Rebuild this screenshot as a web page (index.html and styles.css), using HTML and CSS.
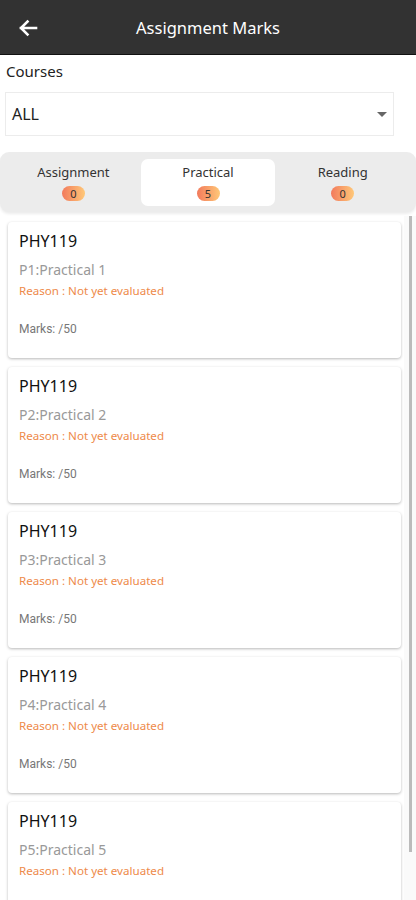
FILE: index.html
```html
<!DOCTYPE html>
<html lang="en">
<head>
  <meta charset="UTF-8">
  <meta name="viewport" content="width=device-width, initial-scale=1.0">
  <title>Assignment Marks</title>
  <link rel="stylesheet" href="styles.css">
</head>
<body>
  <!-- top bar -->
  <div class="appbar">
    <svg class="back" width="20" height="18" viewBox="0 0 20 18">
      <path d="M18 9H3M9.5 2.5L3 9l6.5 6.5" fill="none" stroke="#fff" stroke-width="2.6" stroke-linecap="square"/>
    </svg>
    <div class="title">Assignment Marks</div>
  </div>

  <!-- course filter -->
  <div class="filter">
    <div class="label">Courses</div>
    <div class="select">
      <span>ALL</span>
      <span class="caret"></span>
    </div>
  </div>

  <!-- tabs -->
  <div class="tabs">
    <div class="tab">
      <div class="tab-name">Assignment</div>
      <span class="badge">0</span>
    </div>
    <div class="tab active">
      <div class="tab-name">Practical</div>
      <span class="badge">5</span>
    </div>
    <div class="tab">
      <div class="tab-name">Reading</div>
      <span class="badge">0</span>
    </div>
  </div>

  <!-- list -->
  <div class="list">
    <div class="cards">
      <div class="card">
        <div class="code">PHY119</div>
        <div class="name">P1:Practical 1</div>
        <div class="reason">Reason : Not yet evaluated</div>
        <div class="marks">Marks: /50</div>
      </div>
      <div class="card">
        <div class="code">PHY119</div>
        <div class="name">P2:Practical 2</div>
        <div class="reason">Reason : Not yet evaluated</div>
        <div class="marks">Marks: /50</div>
      </div>
      <div class="card">
        <div class="code">PHY119</div>
        <div class="name">P3:Practical 3</div>
        <div class="reason">Reason : Not yet evaluated</div>
        <div class="marks">Marks: /50</div>
      </div>
      <div class="card">
        <div class="code">PHY119</div>
        <div class="name">P4:Practical 4</div>
        <div class="reason">Reason : Not yet evaluated</div>
        <div class="marks">Marks: /50</div>
      </div>
      <div class="card">
        <div class="code">PHY119</div>
        <div class="name">P5:Practical 5</div>
        <div class="reason">Reason : Not yet evaluated</div>
        <div class="marks">Marks: /50</div>
      </div>
    </div>
    <div class="scrollbar"><div class="thumb"></div></div>
  </div>
</body>
</html>
```

FILE: styles.css
```css
body {
  margin: 0;
  font-family: "Noto Sans", "Open Sans", sans-serif;
  background: #fff;
  color: #222;
  height: 900px;
  overflow: hidden;
}
/* top bar */
.appbar {
  height: 54px;
  background: #323232;
  border-bottom: 1px solid #111;
  display: flex;
  align-items: center;
  position: relative;
}
.back {
  margin-left: 18px;
  margin-top: 1px;
}
.title {
  position: absolute;
  left: 0;
  right: 0;
  text-align: center;
  color: #fff;
  font-size: 16.5px;
  pointer-events: none;
}
/* course filter */
.filter {
  padding: 5px 22px 0 5px;
}
.label {
  font-size: 15px;
  color: #222;
  padding-left: 1px;
  line-height: 22px;
}
.select {
  margin-top: 10px;
  height: 42px;
  border: 1px solid #ececec;
  display: flex;
  align-items: center;
  justify-content: space-between;
  padding: 0 6px 0 6px;
  font-size: 16px;
  color: #222;
}
.caret {
  width: 0;
  height: 0;
  border-left: 5px solid transparent;
  border-right: 5px solid transparent;
  border-top: 5px solid #666;
  margin-top: 1px;
}
/* tabs */
.tabs {
  margin-top: 16px;
  height: 60px;
  background: #ececec;
  border-radius: 9px;
  display: flex;
  align-items: center;
  padding: 0 6px;
  box-shadow: 0 2px 3px rgba(0, 0, 0, 0.08);
  position: relative;
}
.tab {
  flex: 1;
  height: 47px;
  border-radius: 7px;
  display: flex;
  flex-direction: column;
  align-items: center;
  justify-content: center;
  gap: 6px;
}
.tab.active {
  background: #fff;
}
.tab-name {
  font-size: 13px;
  color: #333;
  line-height: 16px;
}
.badge {
  display: inline-block;
  min-width: 23px;
  height: 15px;
  line-height: 15px;
  border-radius: 8px;
  font-size: 11px;
  text-align: center;
  color: #333;
  background: linear-gradient(90deg, #f27a5c, #ffc878);
}
/* list */
.list {
  display: flex;
  padding-top: 10px;
}
.cards {
  flex: 1;
  padding: 0 3px 0 8px;
  display: flex;
  flex-direction: column;
  gap: 9px;
}
.card {
  height: 136px;
  box-sizing: border-box;
  background: #fff;
  border-radius: 4px;
  box-shadow: 0 1px 3px rgba(0, 0, 0, 0.28);
  padding: 9px 11px;
  flex-shrink: 0;
}
.code {
  font-size: 16px;
  color: #111;
  line-height: 20px;
}
.name {
  margin-top: 10px;
  font-size: 14px;
  color: #999;
  line-height: 18px;
}
.reason {
  margin-top: 4px;
  font-size: 11.6px;
  color: #ee8a4a;
  line-height: 16px;
}
.marks {
  margin-top: 22px;
  font-family: Roboto, "Liberation Sans", sans-serif;
  font-size: 12px;
  color: #777;
  line-height: 16px;
}
.scrollbar {
  width: 8px;
  margin-top: -6px;
  padding-right: 4px;
  display: flex;
  justify-content: flex-end;
  background: #fafafa;
}
.thumb {
  width: 3px;
  height: 636px;
  background: #bbb;
}
```
